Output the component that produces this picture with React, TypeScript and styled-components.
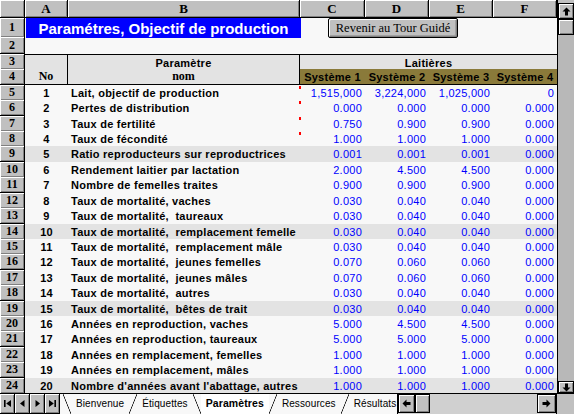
import React from "react";
import styled, { createGlobalStyle, css } from "styled-components";

const SANS = `"Liberation Sans", Arial, sans-serif`;
const SERIF = `"Liberation Serif", "Times New Roman", serif`;
const COLS = "25px 43px 232px 65px 64px 64px 64px";

const GlobalStyle = createGlobalStyle`
  html, body { margin: 0; padding: 0; background: #f8f8f8; }
  body { width: 574px; height: 414px; overflow: hidden; }
  * { box-sizing: border-box; }
`;

const BODY_H = 339;
const ROW_COUNT = 22;
const rowHeights = Array.from(
  { length: ROW_COUNT },
  (_, i) => Math.round(((i + 1) * BODY_H) / ROW_COUNT) - Math.round((i * BODY_H) / ROW_COUNT)
);

type Item = { label: string; v: string[]; note?: boolean };
const DATA: Item[] = [
  { label: "Lait, objectif de production", v: ["1,515,000", "3,224,000", "1,025,000", "0"], note: true },
  { label: "Pertes de distribution", v: ["0.000", "0.000", "0.000", "0.000"], note: true },
  { label: "Taux de fertilité", v: ["0.750", "0.900", "0.900", "0.000"], note: true },
  { label: "Taux de fécondité", v: ["1.000", "1.000", "1.000", "0.000"], note: true },
  { label: "Ratio reproducteurs sur reproductrices", v: ["0.001", "0.001", "0.001", "0.000"] },
  { label: "Rendement laitier par lactation", v: ["2.000", "4.500", "4.500", "0.000"] },
  { label: "Nombre de femelles traites", v: ["0.900", "0.900", "0.900", "0.000"] },
  { label: "Taux de mortalité, vaches", v: ["0.030", "0.040", "0.040", "0.000"] },
  { label: "Taux de mortalité,  taureaux", v: ["0.030", "0.040", "0.040", "0.000"] },
  { label: "Taux de mortalité,  remplacement femelle", v: ["0.030", "0.040", "0.040", "0.000"] },
  { label: "Taux de mortalité,  remplacement mâle", v: ["0.030", "0.040", "0.040", "0.000"] },
  { label: "Taux de mortalité,  jeunes femelles", v: ["0.070", "0.060", "0.060", "0.000"] },
  { label: "Taux de mortalité,  jeunes mâles", v: ["0.070", "0.060", "0.060", "0.000"] },
  { label: "Taux de mortalité,  autres", v: ["0.030", "0.040", "0.040", "0.000"] },
  { label: "Taux de mortalité,  bêtes de trait", v: ["0.030", "0.040", "0.040", "0.000"] },
  { label: "Années en reproduction, vaches", v: ["5.000", "4.500", "4.500", "0.000"] },
  { label: "Années en reproduction, taureaux", v: ["5.000", "5.000", "5.000", "0.000"] },
  { label: "Années en remplacement, femelles", v: ["1.000", "1.000", "1.000", "0.000"] },
  { label: "Années en remplacement, mâles", v: ["1.000", "1.000", "1.000", "0.000"] },
  { label: "Nombre d'années avant l'abattage, autres", v: ["1.000", "1.000", "1.000", "0.000"] },
];
const HIGHLIGHT = new Set([9, 14, 19, 24]);

const bevel = css`
  background: #c0c0c0;
  box-shadow: inset 1px 1px 0 #ffffff, inset -1px -1px 0 #808080;
`;

const Window = styled.div`
  width: 574px;
  height: 414px;
  display: flex;
  flex-direction: column;
  background: #f8f8f8;
  overflow: hidden;
  font-family: ${SANS};
`;

const Main = styled.div`
  display: flex;
  height: 393px;
`;

const Sheet = styled.div`
  width: 557px;
  display: flex;
  flex-direction: column;
`;

const GridRow = styled.div<{ $h: number; $hl?: boolean }>`
  display: grid;
  grid-template-columns: ${COLS};
  height: ${(p) => p.$h}px;
  background: ${(p) => (p.$hl ? "#e3e3e3" : "transparent")};
`;

const ColHeader = styled.div`
  ${bevel};
  border-right: 1px solid #000;
  border-bottom: 1px solid #000;
  display: flex;
  align-items: center;
  justify-content: center;
  font: bold 13px ${SERIF};
  color: #000;
`;

const RowHeader = styled.div`
  ${bevel};
  border-right: 1px solid #000;
  border-bottom: 1px solid #000;
  display: flex;
  align-items: center;
  justify-content: center;
  font: bold 12px ${SERIF};
  color: #000;
`;

const TitleCell = styled.div`
  grid-column: 2 / span 2;
  margin-left: 1px;
  margin-right: -1px;
  background: #0000ff;
  color: #fff;
  font: bold 15px ${SANS};
  display: flex;
  align-items: center;
  justify-content: center;
  white-space: nowrap;
`;

const ButtonCell = styled.div`
  grid-column: 4 / span 4;
  display: flex;
  align-items: flex-start;
  padding-left: 28px;
`;

const TourButton = styled.button`
  width: 130px;
  height: 20px;
  margin: 0;
  padding: 0;
  background: #c0c0c0;
  border: 1px solid #000;
  border-radius: 2px;
  box-shadow: inset 1px 1px 0 #fff, inset -1px -1px 0 #808080, inset -2px -2px 0 #a0a0a0;
  font: 12.5px ${SERIF};
  color: #000;
  position: relative;
  z-index: 1;
`;

const SubCell = styled.div<{ $span?: number; $divider?: boolean; $top?: boolean; $bottom?: boolean; $serif?: boolean; $olive?: boolean }>`
  grid-column: span ${(p) => p.$span ?? 1};
  background: ${(p) => (p.$olive ? "#8a7a3a" : "#e3e3e3")};
  border-right: ${(p) => (p.$divider ? "1px solid #000" : "none")};
  border-top: ${(p) => (p.$top ? "1px solid #000" : "none")};
  border-bottom: ${(p) => (p.$bottom ? "1px solid #000" : "none")};
  display: flex;
  align-items: center;
  justify-content: center;
  color: #000;
  white-space: nowrap;
  overflow: hidden;
  ${(p) =>
    p.$serif
      ? css`font: bold 12px ${SERIF};`
      : css`font: bold 11px ${SANS}; letter-spacing: 0.25px;`}
`;

const NoCell = styled.div`
  display: flex;
  align-items: center;
  justify-content: center;
  font: bold 11px ${SANS};
  letter-spacing: 0.25px;
  color: #000;
`;

const LabelCell = styled.div`
  position: relative;
  display: flex;
  align-items: center;
  padding-left: 3px;
  font: bold 11px ${SANS};
  letter-spacing: 0.25px;
  color: #000;
  white-space: pre;
  overflow: visible;
`;

const NoteMark = styled.span`
  position: absolute;
  top: 1px;
  right: -1px;
  width: 2px;
  height: 3px;
  background: #ff0000;
`;

const ValueCell = styled.div`
  display: flex;
  align-items: center;
  justify-content: flex-end;
  padding-right: 3px;
  font: 11px ${SANS};
  letter-spacing: 0.25px;
  color: #0000ff;
`;

const VScroll = styled.div`
  width: 17px;
  border-left: 1px solid #000;
  background: #c0c0c0;
  display: flex;
  flex-direction: column;
  padding-top: 3px;
`;

const ScrollBtn = styled.div<{ $h: number; $w?: number }>`
  ${bevel};
  height: ${(p) => p.$h}px;
  width: ${(p) => (p.$w ? `${p.$w}px` : "auto")};
  flex: none;
  border: 1px solid #000;
  display: flex;
  align-items: center;
  justify-content: center;
`;

const Track = styled.div<{ $dir: "v" | "h" }>`
  flex: 1;
  background: ${(p) => (p.$dir === "v" ? "#b8b8b8" : "#d0d0d0")};
`;

const TabBar = styled.div`
  height: 21px;
  display: flex;
  border-top: 1px solid #000;
  background: #f8f8f8;
`;

const NavGroup = styled.div`
  display: flex;
  flex: none;
`;

const NavBtn = styled.div`
  ${bevel};
  width: 15px;
  height: 100%;
  border-right: 1px solid #000;
  border-bottom: 1px solid #000;
  display: flex;
  align-items: center;
  justify-content: center;
`;

const Tabs = styled.div`
  display: flex;
  width: 337px;
  flex: none;
  padding-left: 3px;
  overflow: hidden;
`;

const Slash = styled.div<{ $back?: boolean }>`
  width: 8px;
  flex: none;
  height: 100%;
  background: linear-gradient(
    ${(p) => (p.$back ? "to top right" : "to bottom right")},
    transparent calc(50% - 0.7px),
    #000 50%,
    transparent calc(50% + 0.7px)
  );
`;

const Tab = styled.div<{ $active?: boolean }>`
  flex: none;
  padding: 0 5px 2px;
  display: flex;
  align-items: center;
  white-space: nowrap;
  color: #000;
  background: ${(p) => (p.$active ? "#ffffff" : "transparent")};
  font: ${(p) => (p.$active ? `bold 10.5px ${SANS}` : `10px ${SANS}`)};
  letter-spacing: 0.1px;
`;

const HScroll = styled.div`
  width: 160px;
  flex: none;
  display: flex;
  border-left: 1px solid #000;
  border-right: 1px solid #000;
  background: #d0d0d0;
`;

const Corner = styled.div`
  flex: 1;
  background: #c0c0c0;
`;

const ArrowSvg = styled.svg<{ $rot: number }>`
  transform: rotate(${(p) => p.$rot}deg);
  display: block;
`;

const Arrow = ({ dir }: { dir: "up" | "down" | "left" | "right" }) => {
  const rot = { up: 0, right: 90, down: 180, left: 270 }[dir];
  return (
    <ArrowSvg $rot={rot} width="9" height="9" viewBox="0 0 9 9">
      <polygon points="4.5,0.5 8.5,4.5 6,4.5 6,8.5 3,8.5 3,4.5 0.5,4.5" fill="#000" />
    </ArrowSvg>
  );
};

const NavIcon = ({ kind }: { kind: "first" | "prev" | "next" | "last" }) => (
  <svg width="9" height="9" viewBox="0 0 9 9">
    {kind === "first" && (
      <>
        <rect x="1" y="1" width="1.6" height="7" fill="#000" />
        <polygon points="8,1 8,8 3.2,4.5" fill="#000" />
      </>
    )}
    {kind === "prev" && <polygon points="6.5,1 6.5,8 2,4.5" fill="#000" />}
    {kind === "next" && <polygon points="2.5,1 2.5,8 7,4.5" fill="#000" />}
    {kind === "last" && (
      <>
        <polygon points="1,1 1,8 5.8,4.5" fill="#000" />
        <rect x="6.4" y="1" width="1.6" height="7" fill="#000" />
      </>
    )}
  </svg>
);

export default function App() {
  return (
    <>
      <GlobalStyle />
      <Window>
        <Main>
          <Sheet>
            <GridRow $h={18}>
              <ColHeader />
              {["A", "B", "C", "D", "E", "F"].map((c) => (
                <ColHeader key={c}>{c}</ColHeader>
              ))}
            </GridRow>
            <GridRow $h={19}>
              <RowHeader>1</RowHeader>
              <TitleCell>Paramétres, Objectif de production</TitleCell>
              <ButtonCell>
                <TourButton>Revenir au Tour Guidé</TourButton>
              </ButtonCell>
            </GridRow>
            <GridRow $h={17}>
              <RowHeader>2</RowHeader>
            </GridRow>
            <GridRow $h={rowHeights[0]}>
              <RowHeader>3</RowHeader>
              <SubCell $divider $top />
              <SubCell $divider $top>Paramètre</SubCell>
              <SubCell $span={4} $top>Laitières</SubCell>
            </GridRow>
            <GridRow $h={rowHeights[1]}>
              <RowHeader>4</RowHeader>
              <SubCell $divider $bottom $serif>No</SubCell>
              <SubCell $divider $bottom $serif>nom</SubCell>
              {[1, 2, 3, 4].map((n) => (
                <SubCell key={n} $olive $bottom>
                  Système {n}
                </SubCell>
              ))}
            </GridRow>
            {DATA.map((item, i) => {
              const r = i + 5;
              return (
                <GridRow key={r} $h={rowHeights[i + 2]} $hl={HIGHLIGHT.has(r)}>
                  <RowHeader>{r}</RowHeader>
                  <NoCell>{i + 1}</NoCell>
                  <LabelCell>
                    {item.label}
                    {item.note && <NoteMark />}
                  </LabelCell>
                  {item.v.map((v, j) => (
                    <ValueCell key={j}>{v}</ValueCell>
                  ))}
                </GridRow>
              );
            })}
          </Sheet>
          <VScroll>
            <ScrollBtn $h={16}>
              <Arrow dir="up" />
            </ScrollBtn>
            <ScrollBtn $h={16} />
            <Track $dir="v" />
            <ScrollBtn $h={12}>
              <Arrow dir="down" />
            </ScrollBtn>
          </VScroll>
        </Main>
        <TabBar>
          <NavGroup>
            <NavBtn><NavIcon kind="first" /></NavBtn>
            <NavBtn><NavIcon kind="prev" /></NavBtn>
            <NavBtn><NavIcon kind="next" /></NavBtn>
            <NavBtn><NavIcon kind="last" /></NavBtn>
          </NavGroup>
          <Tabs>
            <Slash $back />
            <Tab>Bienvenue</Tab>
            <Slash />
            <Tab>Étiquettes</Tab>
            <Slash $back />
            <Tab $active>Paramètres</Tab>
            <Slash />
            <Tab>Ressources</Tab>
            <Slash />
            <Tab>Résultats</Tab>
          </Tabs>
          <HScroll>
            <ScrollBtn $h={19} $w={17}>
              <Arrow dir="left" />
            </ScrollBtn>
            <ScrollBtn $h={19} $w={15} />
            <Track $dir="h" />
            <ScrollBtn $h={19} $w={19}>
              <Arrow dir="right" />
            </ScrollBtn>
          </HScroll>
          <Corner />
        </TabBar>
      </Window>
    </>
  );
}
